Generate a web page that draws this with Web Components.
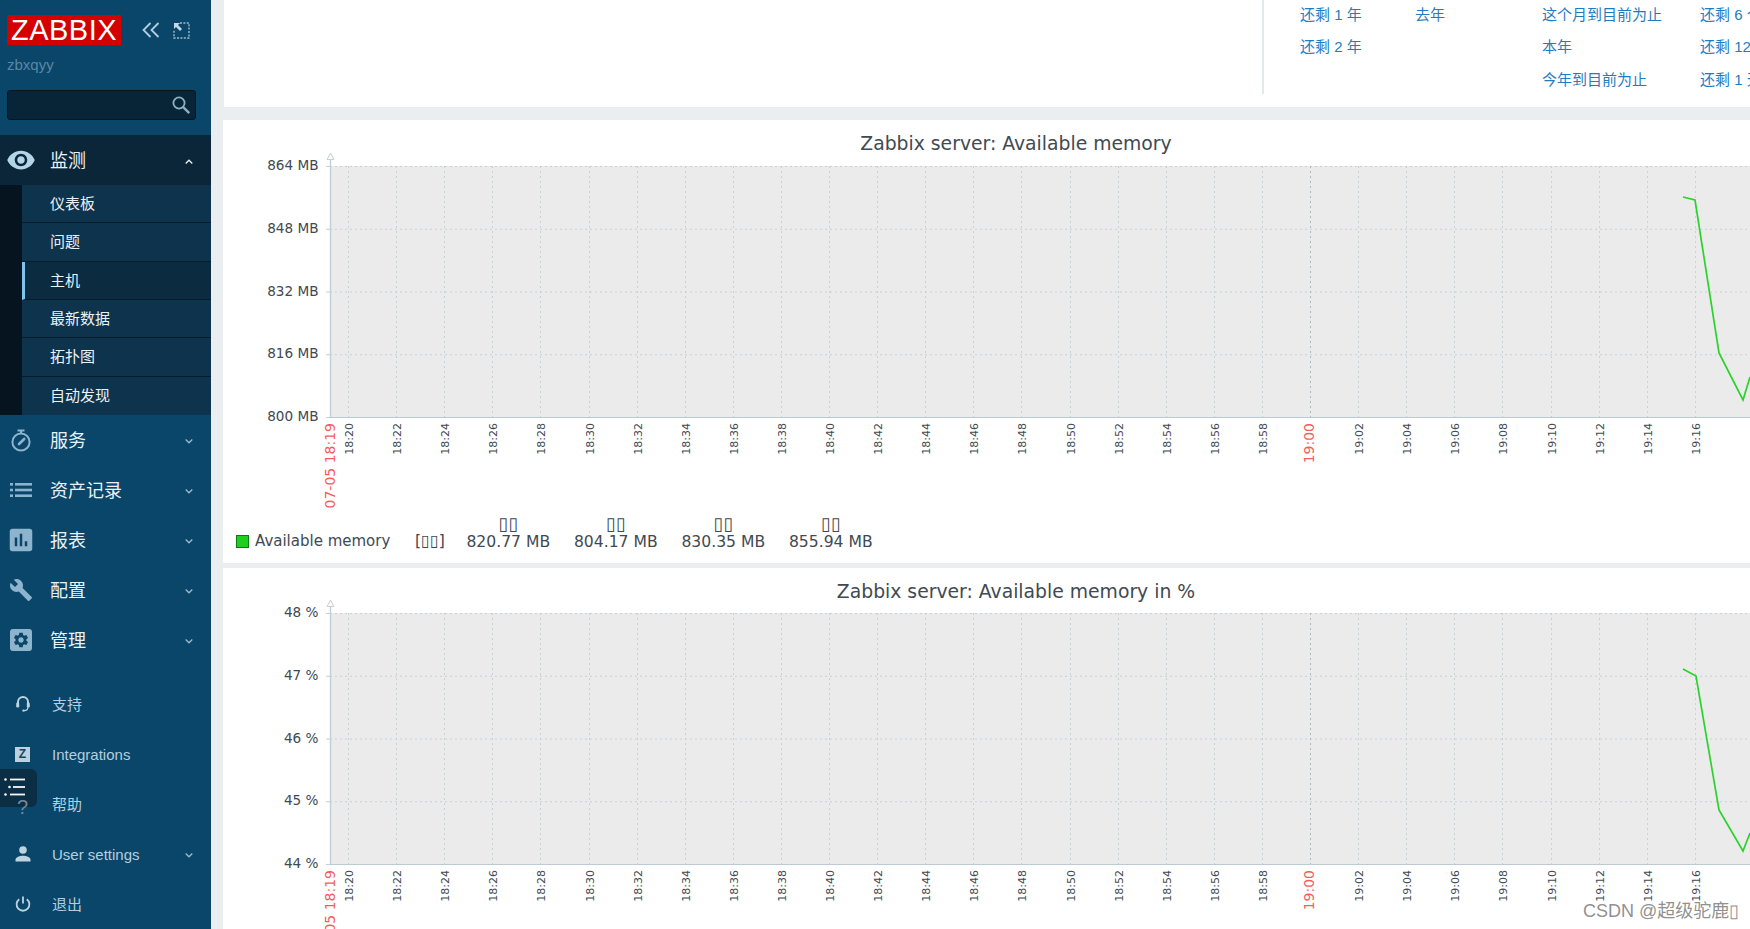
<!DOCTYPE html>
<html lang="zh">
<head>
<meta charset="utf-8">
<title>Zabbix</title>
<style>
html,body{margin:0;padding:0;height:100%;overflow:hidden;background:#ebeef0}
body{font-family:"Liberation Sans","Noto Sans CJK SC",sans-serif}
</style>
</head>
<body>
<zbx-app>
  <zbx-sidebar slot="side">
    <zbx-menu-item icon="eye" state="open" chevron="up">监测</zbx-menu-item>
    <zbx-submenu>
      <zbx-sub-item>仪表板</zbx-sub-item>
      <zbx-sub-item>问题</zbx-sub-item>
      <zbx-sub-item active>主机</zbx-sub-item>
      <zbx-sub-item>最新数据</zbx-sub-item>
      <zbx-sub-item>拓扑图</zbx-sub-item>
      <zbx-sub-item last>自动发现</zbx-sub-item>
    </zbx-submenu>
    <zbx-menu-item icon="timer" chevron="down">服务</zbx-menu-item>
    <zbx-menu-item icon="list" chevron="down">资产记录</zbx-menu-item>
    <zbx-menu-item icon="bars" chevron="down">报表</zbx-menu-item>
    <zbx-menu-item icon="wrench" chevron="down">配置</zbx-menu-item>
    <zbx-menu-item icon="gear" chevron="down">管理</zbx-menu-item>
    <div slot="bottom">
      <zbx-menu-item small icon="headset">支持</zbx-menu-item>
      <zbx-menu-item small icon="z">Integrations</zbx-menu-item>
      <zbx-menu-item small icon="help">帮助</zbx-menu-item>
      <zbx-menu-item small icon="user" chevron="down">User settings</zbx-menu-item>
      <zbx-menu-item small icon="power">退出</zbx-menu-item>
    </div>
  </zbx-sidebar>
  <zbx-time-presets></zbx-time-presets>
  <zbx-graph caption="Zabbix server: Available memory" labels="864 MB,848 MB,832 MB,816 MB,800 MB" top="46" line="1460,77 1472,80 1496,233 1520,280 1527,257" legend></zbx-graph>
  <zbx-graph caption="Zabbix server: Available memory in %" labels="48 %,47 %,46 %,45 %,44 %" top="45" line="1460,101 1473,108 1496,242 1520,283 1527,265" fill></zbx-graph>
</zbx-app>
<script>
const ICONS = {
  eye:'<svg width="30" height="30" viewBox="0 0 24 24"><path fill="currentColor" d="M12 4.5C7 4.5 2.73 7.61 1 12c1.73 4.39 6 7.5 11 7.5s9.27-3.11 11-7.5c-1.73-4.39-6-7.5-11-7.5zM12 17c-2.76 0-5-2.24-5-5s2.24-5 5-5 5 2.24 5 5-2.24 5-5 5zm0-8c-1.66 0-3 1.34-3 3s1.34 3 3 3 3-1.34 3-3-1.34-3-3-3z"/></svg>',
  timer:'<svg width="24" height="26" viewBox="0 0 24 26"><g fill="none" stroke="currentColor"><circle cx="12" cy="15" r="8.6" stroke-width="2"/><path d="M8.5 3.5h7M12 3.5v3" stroke-width="2"/><path d="M10 17l5.2-5" stroke-width="2.6" stroke-linecap="round"/></g></svg>',
  list:'<svg width="24" height="16" viewBox="0 0 24 16"><g fill="currentColor"><rect x="1" y="1" width="3" height="2.6"/><rect x="6" y="1" width="17" height="2.6"/><rect x="1" y="6.7" width="3" height="2.6"/><rect x="6" y="6.7" width="17" height="2.6"/><rect x="1" y="12.4" width="3" height="2.6"/><rect x="6" y="12.4" width="17" height="2.6"/></g></svg>',
  bars:'<svg width="30" height="30" viewBox="0 0 24 24"><path fill="currentColor" d="M19 3H5c-1.1 0-2 .9-2 2v14c0 1.1.9 2 2 2h14c1.1 0 2-.9 2-2V5c0-1.1-.9-2-2-2zM9 17H7v-7h2v7zm4 0h-2V7h2v10zm4 0h-2v-4h2v4z"/></svg>',
  wrench:'<svg width="24" height="24" viewBox="0 0 24 24"><path fill="currentColor" d="M22.7 19l-9.1-9.1c.9-2.3.4-5-1.5-6.9-2-2-5-2.4-7.4-1.3L9 6 6 9 1.6 4.7C.4 7.1.9 10.1 2.9 12.1c1.9 1.9 4.6 2.4 6.9 1.5l9.1 9.1c.4.4 1 .4 1.4 0l2.3-2.3c.5-.4.5-1.1.1-1.4z"/></svg>',
  gear:'<svg width="24" height="24" viewBox="0 0 24 24"><rect x="1" y="1" width="22" height="22" rx="3" fill="currentColor"/><g transform="translate(3 3) scale(.75)"><path fill="#0a466a" d="M19.14,12.94c0.04-0.3,0.06-0.61,0.06-0.94c0-0.32-0.02-0.64-0.07-0.94l2.03-1.58c0.18-0.14,0.23-0.41,0.12-0.61l-1.92-3.32c-0.12-0.22-0.37-0.29-0.59-0.22l-2.39,0.96c-0.5-0.38-1.03-0.7-1.62-0.94L14.4,2.81c-0.04-0.24-0.24-0.41-0.48-0.41h-3.84c-0.24,0-0.43,0.17-0.47,0.41L9.25,5.35C8.66,5.59,8.12,5.92,7.63,6.29L5.24,5.33c-0.22-0.08-0.47,0-0.59,0.22L2.74,8.87C2.62,9.08,2.66,9.34,2.86,9.48l2.03,1.58C4.84,11.36,4.8,11.69,4.8,12s0.02,0.64,0.07,0.94l-2.03,1.58c-0.18,0.14-0.23,0.41-0.12,0.61l1.92,3.32c0.12,0.22,0.37,0.29,0.59,0.22l2.39-0.96c0.5,0.38,1.03,0.7,1.62,0.94l0.36,2.54c0.05,0.24,0.24,0.41,0.48,0.41h3.84c0.24,0,0.44-0.17,0.47-0.41l0.36-2.54c0.59-0.24,1.13-0.56,1.62-0.94l2.39,0.96c0.22,0.08,0.47,0,0.59-0.22l1.92-3.32c0.12-0.22,0.07-0.47-0.12-0.61L19.14,12.94zM12,15.6c-1.98,0-3.6-1.62-3.6-3.6s1.62-3.6,3.6-3.6s3.6,1.62,3.6,3.6S13.98,15.6,12,15.6z"/></g></svg>',
  headset:'<svg width="16" height="18" viewBox="0 0 16 18"><g fill="none" stroke="currentColor"><path d="M3 9V7a5 5 0 0 1 10 0v2" stroke-width="2"/><path d="M13 12c0 2.4-1.6 3.6-4 3.6" stroke-width="1.2"/></g><g fill="currentColor"><rect x="1.2" y="7.5" width="3" height="5" rx="1.2"/><rect x="11.8" y="7.5" width="3" height="5" rx="1.2"/><circle cx="8.5" cy="15.6" r="1.2"/></g></svg>',
  user:'<svg width="16" height="16" viewBox="0 0 16 16"><g fill="currentColor"><circle cx="8" cy="4" r="3.8"/><path d="M.5 15.5v-1.7c0-2.8 4.6-4 7.5-4s7.5 1.2 7.5 4v1.7z"/></g></svg>',
  power:'<svg width="16" height="16" viewBox="0 0 16 16"><g fill="none" stroke="currentColor" stroke-width="1.8"><path d="M8 .5v7"/><path d="M4.2 3.2a6.4 6.4 0 1 0 7.6 0"/></g></svg>'
};

class ZbxApp extends HTMLElement {
  constructor(){
    super();
    this.attachShadow({mode:'open'}).innerHTML = `
    <style>
      :host{display:flex;width:1750px;height:929px;overflow:hidden;background:#ebeef0;position:relative}
      main{flex:1;min-width:0;display:flex;flex-direction:column;padding-left:12px;overflow:hidden}
      .mark{position:absolute;left:1583px;top:896px;font:18px "Liberation Sans","Noto Sans CJK SC",sans-serif;color:rgba(115,115,115,.8);text-shadow:0 0 2px #fff;white-space:nowrap}
    </style>
    <slot name="side"></slot>
    <main><slot></slot></main>
    <div class="mark">CSDN @超级驼鹿▯</div>`;
  }
}
class ZbxSidebar extends HTMLElement {
  constructor(){
    super();
    this.attachShadow({mode:'open'}).innerHTML = `
    <style>
      :host{display:flex;flex-direction:column;flex:0 0 211px;width:211px;height:929px;background:#0a466a;position:relative;overflow:hidden}
      header{height:135px;box-sizing:border-box;padding:15px 15px 0 7px;display:flex;flex-direction:column}
      .top{display:flex;align-items:center;height:30px}
      .logo{width:114px;height:30px;box-sizing:border-box;background:#d40000;color:#fff;font:29px/30px "Liberation Sans",sans-serif;letter-spacing:.5px;text-align:center}
      .top svg{display:block}
      .col{margin-left:21px}
      .exp{margin-left:13px}
      .user{font:15px/20px "Liberation Sans",sans-serif;color:#5b86a2;margin-top:10px;height:20px}
      .search{margin-top:15px;height:30px;box-sizing:border-box;background:#082537;border:1px solid #05161f;border-radius:3px;display:flex;align-items:center;justify-content:flex-end;padding-right:4px}
      .bottom{margin-top:14px}
      .float{position:absolute;left:0;top:769px;width:37px;height:38px;background:#0b2e45;border-radius:0 6px 6px 0;display:flex;align-items:flex-start;padding:9px 0 0 4px;box-sizing:border-box}
    </style>
    <header>
      <div class="top">
        <div class="logo">ZABBIX</div>
        <svg class="col" width="18" height="16" viewBox="0 0 18 16"><path d="M8.5 1 1.5 8l7 7M16.5 1l-7 7 7 7" fill="none" stroke="#b5cfdf" stroke-width="1.8"/></svg>
        <svg class="exp" width="17" height="17" viewBox="0 0 17 17"><path d="M7 1h9v15H1V8" fill="none" stroke="#9dbbce" stroke-width="1.4" stroke-dasharray="2 1.4"/><path fill="#c4d9e6" d="M1 1h6L5 3l4 4-2 2-4-4-2 2z"/></svg>
      </div>
      <div class="user">zbxqyy</div>
      <div class="search"><svg width="20" height="20" viewBox="0 0 20 20"><g fill="none" stroke="#8db0c5"><circle cx="8" cy="8" r="5.6" stroke-width="1.8"/><path d="M12.2 12.2l6 6" stroke-width="2.4"/></g></svg></div>
    </header>
    <slot></slot>
    <div class="bottom"><slot name="bottom"></slot></div>
    <div class="float"><svg width="22" height="20" viewBox="0 0 22 20"><g fill="#f4f8fb"><circle cx="1.5" cy="1.5" r="1.3"/><rect x="6" y=".6" width="15" height="1.8"/><circle cx="5.5" cy="9" r="1.3"/><rect x="9" y="8.1" width="12" height="1.8"/><circle cx="1.5" cy="16.5" r="1.3"/><rect x="6" y="15.6" width="15" height="1.8"/></g></svg></div>`;
  }
}
class ZbxMenuItem extends HTMLElement {
  connectedCallback(){
    if(this.shadowRoot) return;
    const icon=this.getAttribute('icon'), chev=this.getAttribute('chevron'), small=this.hasAttribute('small');
    const open=this.getAttribute('state')==='open';
    const cjk=/[\u4e00-\u9fff]/.test(this.textContent);
    let glyph=ICONS[icon]||'';
    if(icon==='z') glyph='<span class="z">Z</span>';
    if(icon==='help') glyph='<span class="q">?</span>';
    const chevron = chev ? `<svg class="chev" width="8" height="5" viewBox="0 0 8 5"><path d="${chev==='up'?'M.7 4.5 4 1.2l3.3 3.3':'M.7 .5 4 3.8 7.3 .5'}" fill="none" stroke="${chev==='up'?'#e8f1f6':'#9dbace'}" stroke-width="1.3"/></svg>`:'';
    this.attachShadow({mode:'open'}).innerHTML = `
    <style>
      :host{display:flex;align-items:center;height:50px;position:relative;background:${open?'#0b2639':'transparent'};color:${small?'#b4cfdf':'#e9f2f7'};font:15px "Liberation Sans","Noto Sans CJK SC",sans-serif;${small?'':'font-size:18px;'}white-space:nowrap}
      .ic{flex:0 0 ${small?'52px':'50px'};height:50px;box-sizing:border-box;padding-right:${small?'7px':'8px'};display:flex;align-items:center;justify-content:center;color:${small?'#bdd3e0':(open?'#b4d4e8':'#8eb3cc')}}
      .ic svg{display:block;flex:none}
      .lab{flex:1;${cjk?'padding-bottom:2px;':'padding-top:1px;'}}
      .chev{margin-right:18px;flex:none;position:relative;top:1px}
      .z{display:block;width:15px;height:15px;background:#bcd0dd;color:#0a466a;font:bold 12px/15px "Liberation Sans",sans-serif;text-align:center}
      .q{position:relative;z-index:3;top:3px;font:20px "Liberation Sans",sans-serif;color:#73899a}
    </style>
    <div class="ic">${glyph}</div>
    <div class="lab"><slot></slot></div>${chevron}`;
    if(icon==='help') this.style.zIndex=5;
  }
}
class ZbxSubmenu extends HTMLElement {
  constructor(){
    super();
    this.attachShadow({mode:'open'}).innerHTML = `
    <style>:host{display:grid;grid-template-rows:repeat(6,1fr);height:230px;border-left:22px solid #05141e;background:#0e334d}</style><slot></slot>`;
  }
}
class ZbxSubItem extends HTMLElement {
  connectedCallback(){
    if(this.shadowRoot) return;
    const active=this.hasAttribute('active'), last=this.hasAttribute('last');
    this.attachShadow({mode:'open'}).innerHTML = `
    <style>
      :host{display:flex;align-items:center;box-sizing:border-box;padding-left:${active?25:28}px;padding-bottom:2px;font:15px "Liberation Sans","Noto Sans CJK SC",sans-serif;color:#e9f2f7;white-space:nowrap;
        background:${active?'#0b2b40':'transparent'};${active?'border-left:3px solid #7fc4ee;':''}${last?'':'border-bottom:1px solid #071c2a;'}}
    </style><slot></slot>`;
  }
}
class ZbxTimePresets extends HTMLElement {
  constructor(){
    super();
    const rows=[['还剩 1 年','去年','这个月到目前为止','还剩 6 个月'],['还剩 2 年','','本年','还剩 12 个月'],['','','今年到目前为止','还剩 1 天']];
    const cells=rows.flat().map(t=>`<span>${t}</span>`).join('');
    this.attachShadow({mode:'open'}).innerHTML = `
    <style>
      :host{display:flex;justify-content:flex-end;height:107px;flex:none;margin-left:1px;background:#fff;margin-bottom:13px;overflow:hidden}
      .g{width:488px;height:94px;box-sizing:border-box;border-left:2px solid #e3e8eb;padding-left:36px;display:grid;grid-template-columns:115px 127px 158px 60px;grid-template-rows:30px 32px 32px;font:15px/30px "Liberation Sans","Noto Sans CJK SC",sans-serif;color:#1f7cc0;white-space:nowrap;overflow:hidden}
      span{line-height:30px}
      span:nth-child(n+5){line-height:33px}
      span:nth-child(n+9){line-height:36px}
    </style>
    <div class="g">${cells}</div>`;
  }
}
class ZbxGraph extends HTMLElement {
  connectedCallback(){
    if(this.shadowRoot) return;
    const cap=this.getAttribute('caption'), labels=this.getAttribute('labels').split(',');
    const top=+this.getAttribute('top'), line=this.getAttribute('line'), H=251, L=107, W=1527;
    const legend=this.hasAttribute('legend');
    let g='';
    for(let i=0;i<5;i++){
      const y=top+H*i/4;
      if(i<4) g+=`<line x1="${L}" x2="${W}" y1="${y+.5}" y2="${y+.5}" stroke="#c6d1d8" stroke-dasharray="2 3"/>`;
      g+=`<text x="95.5" y="${y+4}" text-anchor="end" class="y">${labels[i]}</text>`;
      g+=`<line x1="${L-4}" x2="${L}" y1="${y+.5}" y2="${y+.5}" stroke="#c3ced5"/>`;
    }
    for(let i=0;i<29;i++){
      const x=Math.round(125+48.1*i), m=18*60+20+2*i, hh=Math.floor(m/60), mm=String(m%60).padStart(2,'0');
      const red=m===19*60;
      g+=`<line x1="${x+.5}" x2="${x+.5}" y1="${top}" y2="${top+H}" stroke="${red?'#aeb9c0':'#c6d1d8'}" stroke-dasharray="2 3"/>`;
      g+=`<text transform="translate(${x+(red?4:4.5)} ${top+H+6}) rotate(-90)" text-anchor="end" class="${red?'xr':'x'}">${hh}:${mm}</text>`;
    }
    g+=`<text transform="translate(112 ${top+H+6}) rotate(-90)" text-anchor="end" class="xr">07-05 18:19</text>`;
    this.attachShadow({mode:'open'}).innerHTML = `
    <style>
      :host{display:block;background:#fff;flex:${this.hasAttribute('fill')?'1':'none'};overflow:hidden;${legend?'height:443px;margin-bottom:5px;':''}}
      svg{display:block}
      text{font-family:"DejaVu Sans",sans-serif;fill:#3f4a52}
      .t{font-size:18.8px}
      .y{font-size:13.6px}
      .x{font-size:11px}
      .xr{font-size:14px;fill:#f55c5c}
      .leg{display:grid;grid-template-columns:179px 39.5px repeat(4,107.5px);grid-template-rows:16px 16px;margin-left:13px;font:15.6px/15px "DejaVu Sans",sans-serif;color:#3f4a52;white-space:nowrap}
      .c{text-align:center}
      .v{padding-top:2px}
      .n{display:flex;align-items:center;font-size:15px}
      .sw{width:13px;height:13px;box-sizing:border-box;background:#1fcf1f;border:1px solid #0b7a12;margin-right:6px;flex:none}
      .tf{font-size:18px;line-height:13px;height:13px;position:relative;top:0}
      .br{font-size:15.6px;line-height:15px}
      .br i{font-style:normal;font-size:16px;line-height:15px}
    </style>
    <svg width="${W}" height="${legend?397:361}" viewBox="0 0 ${W} ${legend?397:361}">
      <text x="793" y="30" text-anchor="middle" class="t">${cap}</text>
      <rect x="${L}" y="${top}" width="${W-L}" height="${H}" fill="#ebebeb"/>
      ${g}
      <line x1="${L+.5}" x2="${L+.5}" y1="${top-6}" y2="${top+H+1}" stroke="#c3ced5" stroke-width="1.4"/>
      <line x1="${L}" x2="${W}" y1="${top+H+.5}" y2="${top+H+.5}" stroke="#bccad2" stroke-width="1.2"/>
      <path d="M${L+.5} ${top-13}l3.4 6.5h-6.8z" fill="#fff" stroke="#c3ced5"/>
      <polyline points="${line}" fill="none" stroke="#2ad32a" stroke-width="1.7"/>
    </svg>
    ${legend?`<div class="leg">
      <span></span><span></span>
      <span class="c tf">▯▯</span><span class="c tf">▯▯</span><span class="c tf">▯▯</span><span class="c tf">▯▯</span>
      <span class="n"><span class="sw"></span>Available memory</span><span class="br">[<i>▯▯</i>]</span>
      <span class="c v">820.77 MB</span><span class="c v">804.17 MB</span><span class="c v">830.35 MB</span><span class="c v">855.94 MB</span>
    </div>`:''}`;
  }
}
customElements.define('zbx-app',ZbxApp);
customElements.define('zbx-sidebar',ZbxSidebar);
customElements.define('zbx-menu-item',ZbxMenuItem);
customElements.define('zbx-submenu',ZbxSubmenu);
customElements.define('zbx-sub-item',ZbxSubItem);
customElements.define('zbx-time-presets',ZbxTimePresets);
customElements.define('zbx-graph',ZbxGraph);
</script>
</body>
</html>
